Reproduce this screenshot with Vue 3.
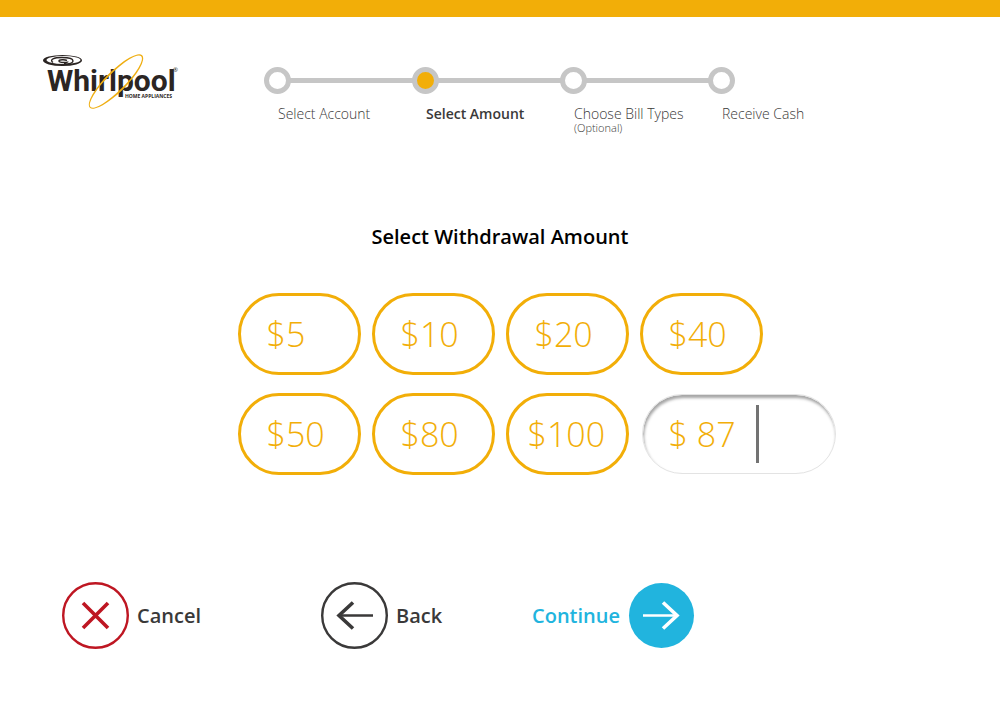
<script setup>
import { ref } from 'vue'

const steps = [
  { label: 'Select Account' },
  { label: 'Select Amount', current: true },
  { label: 'Choose Bill Types', note: '(Optional)' },
  { label: 'Receive Cash' }
]
const amounts = [5, 10, 20, 40, 50, 80, 100]
const custom = ref('$ 87')
</script>

<template>
  <div class="screen">
    <header class="header">
      <svg class="logo" viewBox="0 0 140 58" role="img" aria-label="Whirlpool Home Appliances">
        <path fill="#2b2523" fill-rule="evenodd" d="M3 8.500a19.500 5.500 0 1 0 39 0a19.500 5.500 0 1 0-39 0zM6.500 8a17 4 0 1 0 34 0a17 4 0 1 0-34 0z" />
        <path fill="none" stroke="#2b2523" stroke-width="1.400" d="M13 10.500c-4-3 1-5 9-5 7 0 11 1.500 11 3.500s-4 3-9 3M28 9.500c0 1.500-9 1.500-9-.5 0-1.500 6-1.500 8-.5" />
        <text class="wordmark" x="7" y="39">Whirlpool</text>
        <text class="tagline" x="85" y="46">HOME APPLIANCES</text>
        <text class="registered" x="133" y="20">®</text>
        <path
          transform="translate(76 29.500) rotate(-45)"
          fill="#efae12"
          fill-rule="evenodd"
          d="M-37 0a37 10.500 0 1 0 74 0a37 10.500 0 1 0-74 0zM-36 0a35.800 8.800 0 1 0 71.600 0a35.800 8.800 0 1 0-71.600 0z"
        />
      </svg>
      <ol class="steps">
        <li v-for="s in steps" :key="s.label" class="step" :class="{ current: s.current }" :aria-current="s.current ? 'step' : null">
          <span class="dot"></span>
          <span class="label">{{ s.label }}</span>
          <span v-if="s.note" class="note">{{ s.note }}</span>
        </li>
      </ol>
    </header>

    <main class="main">
      <h1>Select Withdrawal Amount</h1>
      <div class="amounts">
        <button v-for="a in amounts" :key="a" type="button" class="amount" :class="{ long: a >= 100 }">${{ a }}</button>
        <div class="custom">
          <input v-model="custom" type="text" inputmode="numeric" aria-label="Other amount">
          <span class="caret"></span>
        </div>
      </div>
    </main>

    <footer class="actions">
      <button type="button" class="action">
        <svg viewBox="0 0 67 67" class="icon" aria-hidden="true" fill="none" stroke="#be1622">
          <circle cx="33.500" cy="33.500" r="32.300" stroke-width="2.400" />
          <path d="M21 21l25 25M46 21L21 46" stroke-width="3.600" />
        </svg>
        Cancel
      </button>
      <button type="button" class="action">
        <svg viewBox="0 0 67 67" class="icon" aria-hidden="true" fill="none" stroke="#3a3939">
          <circle cx="33.500" cy="33.500" r="32.300" stroke-width="2.400" />
          <path d="M18 33.500h34" stroke-width="2.400" />
          <path d="M32 20.500l-14 13 14 13" stroke-width="3.600" />
        </svg>
        Back
      </button>
      <button type="button" class="action continue">
        Continue
        <svg viewBox="0 0 67 67" class="icon" aria-hidden="true" fill="none" stroke="#fff">
          <circle cx="33.500" cy="33.500" r="32.500" fill="#21b4de" stroke="none" />
          <path d="M15 33.500h34" stroke-width="2.400" />
          <path d="M35 20.500l14 13-14 13" stroke-width="3.600" />
        </svg>
      </button>
    </footer>
  </div>
</template>

<style>
body {
  margin: 0;
  background: #fff;
}
</style>

<style scoped>
.screen {
  border-top: 17px solid #f2ae08;
  min-height: 100vh;
  box-sizing: border-box;
  font-family: "Open Sans", "Noto Sans", sans-serif;
  color: #3a3939;
}
.header {
  display: flex;
  align-items: flex-start;
  gap: 84px;
  padding: 35px 40px 0;
}
.logo {
  width: 140px;
  height: 58px;
  flex: none;
}
.wordmark {
  font: bold 30px Roboto, sans-serif;
  fill: #2b2523;
}
.tagline {
  font: bold 5px "Open Sans", sans-serif;
  fill: #2b2523;
}
.registered {
  font: 6px "Open Sans", sans-serif;
  fill: #2b2523;
}
.steps {
  flex: 1;
  max-width: 592px;
  display: grid;
  grid-template-columns: repeat(4, 1fr);
  margin: 15px 0 0;
  padding: 0;
  list-style: none;
}
.step {
  display: flex;
  flex-direction: column;
  position: relative;
  font-size: 14px;
  font-weight: 300;
  line-height: 16px;
}
.step::before {
  content: "";
  position: absolute;
  top: 11px;
  left: 20px;
  right: 0;
  height: 5px;
  background: #c6c6c6;
}
.step:not(:first-child)::after {
  content: "";
  position: absolute;
  top: 11px;
  left: 0;
  width: 6px;
  height: 5px;
  background: #c6c6c6;
}
.step:last-child::before {
  display: none;
}
.dot {
  position: relative;
  z-index: 1;
  box-sizing: border-box;
  width: 27px;
  height: 27px;
  border: 5px solid #c6c6c6;
  border-radius: 50%;
  background: #fff;
}
.current .dot {
  background: #f2ae08;
}
.label {
  margin: 12px 0 0 14px;
}
.current .label {
  font-weight: 600;
}
.note {
  margin-left: 14px;
  font-size: 11px;
  line-height: 12px;
}
.main {
  margin-top: 89px;
}
h1 {
  margin: 0;
  text-align: center;
  font-size: 20px;
  line-height: 28px;
  font-weight: 600;
  color: #000;
}
.amounts {
  display: grid;
  grid-template-columns: repeat(4, 123px);
  justify-content: center;
  gap: 18px 11px;
  margin-top: 42px;
}
.amount,
.custom input {
  box-sizing: border-box;
  height: 82px;
  border: 3px solid #f2ae08;
  border-radius: 41px;
  background: #fff;
  padding: 0 0 0 26px;
  font-family: inherit;
  font-size: 34px;
  font-weight: 300;
  text-align: left;
  color: #f2ae08;
}
.amount.long {
  padding-left: 19px;
}
.custom {
  position: relative;
  width: 194px;
  height: 82px;
  margin-left: 2px;
}
.custom input {
  width: 194px;
  height: 80px;
  margin-top: 1px;
  border: 1px solid #e3e3e3;
  box-shadow: inset 1px 3px 3px #a5a5a5;
}
.caret {
  position: absolute;
  top: 12px;
  left: 114px;
  width: 3px;
  height: 58px;
  background: #737373;
}
.actions {
  display: grid;
  grid-template-columns: 259fr 211fr 468fr;
  padding-left: 62px;
  margin-top: 107px;
}
.action {
  display: flex;
  align-items: center;
  gap: 8px;
  padding: 0;
  border: 0;
  background: none;
  font-family: inherit;
  font-size: 20px;
  font-weight: 600;
  color: #3a3939;
}
.continue {
  color: #21b4de;
}
.icon {
  width: 67px;
  height: 67px;
  flex: none;
}
</style>
